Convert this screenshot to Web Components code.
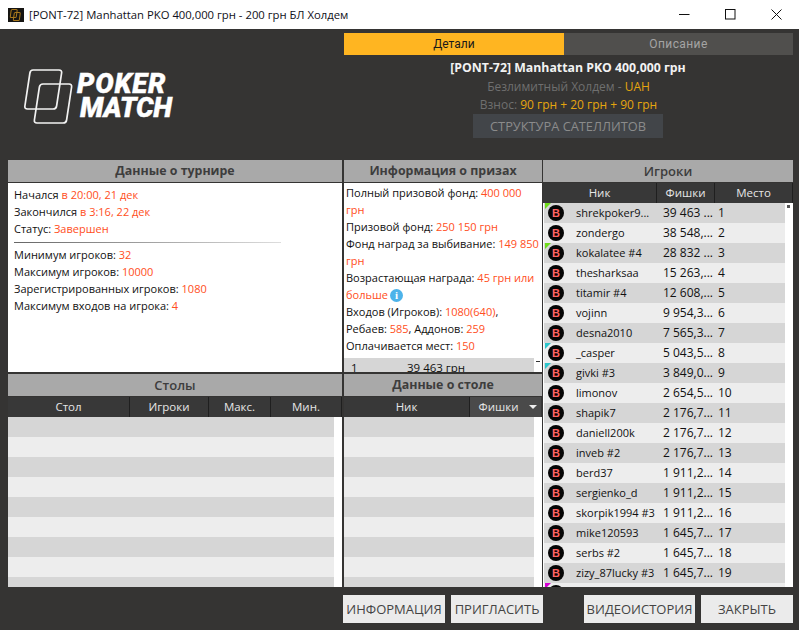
<!DOCTYPE html>
<html lang="ru">
<head>
<meta charset="utf-8">
<title>Manhattan PKO</title>
<style>
    html, body { margin: 0; height: 100%; background: #353433; overflow: hidden; }
    body { font-family: "Open Sans", "Noto Sans", sans-serif; font-size: 11px; }
    .red { color: #ff4e22; }
    .grid {
        display: grid;
        grid-template-columns: 335px 198px 250px;
        grid-template-rows: 212px 213px;
        gap: 2px 1px;
        margin-left: 8px;
    }
    .left { margin-right: 1px; }
    .top { display: flex; height: 131px; }
    .lines { display: block; padding: 3px 6px 0 6px; line-height: 17px; color: #111; }
    .rule { height: 1px; margin: 5px 55px 3px 0; background: linear-gradient(to right, #666, #ddd); }
    .prizes { box-sizing: border-box; height: 189px; overflow: hidden; position: relative; padding-top: 1px; }
    .prizes .lines { padding: 0 0 0 2px; height: 174px; }
    .prize-row { display: flex; background: #d6d6d6; width: 190px; height: 20px; line-height: 20px; color: #111; font-size: 11.5px; }
    .prize-row span:first-child { width: 63px; padding-left: 7px; box-sizing: border-box; }
    .mark { position: absolute; left: 192px; top: 178px; width: 4px; height: 1px; background: #333; }
    .tip { display: inline-block; width: 13px; height: 13px; margin-left: 2px; border-radius: 50%; background: #4db3ea; color: #fff; font: bold 11px/13px "Liberation Serif", serif; text-align: center; vertical-align: 0; }
</style>
</head>
<body>
<template id="bar-tpl">
    <style>
        :host { display: flex; align-items: center; height: 29px; background: #fff; color: #101020; font: 11.3px "Open Sans", sans-serif; }
        .app { width: 16px; height: 14px; margin: 0 5px 0 8px; background: #161513; flex: none; }
        .app svg { display: block; }
        .name { flex: 1; white-space: nowrap; }
        .btn { width: 46px; height: 29px; display: flex; align-items: center; justify-content: center; }
    </style>
    <div class="app"><svg width="16" height="14" viewBox="0 0 16 14" fill="none" stroke="#a9791c" stroke-width="1"><rect x="3.5" y="1.5" width="6" height="8" rx="1" transform="skewX(-8)"/><rect x="7" y="4.5" width="6" height="8" rx="1" transform="skewX(-8)"/></svg></div>
    <div class="name"><slot></slot></div>
    <div class="btn"><svg width="11" height="11"><path d="M0 5.5h10.5" stroke="#111"/></svg></div>
    <div class="btn"><svg width="11" height="11"><rect x=".5" y=".5" width="9.5" height="9.5" fill="none" stroke="#111"/></svg></div>
    <div class="btn"><svg width="11" height="11"><path d="M.5.5l10 10M10.5.5l-10 10" stroke="#111" fill="none"/></svg></div>
</template>

<template id="logo-tpl">
    <style>
        :host { display: block; width: 344px; flex: none; box-sizing: border-box; padding: 40px 0 0 24px; }
        .wrap { display: flex; align-items: flex-start; }
        svg { flex: none; display: block; }
        .word { margin: 3px 0 0 3px; color: #fff; font: italic 900 27.5px/24px Roboto, sans-serif; -webkit-text-stroke: .4px #fff; }
        .word div:first-child { letter-spacing: .8px; }
        .word div:last-child { margin-left: 3px; letter-spacing: -.2px; }
    </style>
    <div class="wrap">
        <svg width="50" height="56" viewBox="0 0 50 56" fill="none" stroke="#f2f2f2" stroke-width="1.7">
            <path d="M9 1h26q3 0 2.6 3l-5 33q-.4 3-3.5 3H3.500q-3 0-2.600-3l5-33Q6.400 1 9 1z"/>
            <path d="M19 15h26q3 0 2.600 3l-5 33q-.4 3-3.500 3H13q-3 0-2.600-3l5-33Q16 15 19 15z"/>
        </svg>
        <div class="word"><div>POKER</div><div>MATCH</div></div>
    </div>
</template>

<template id="head-tpl">
    <style>
        :host { display: block; width: 449px; margin-top: 4px; font: 12px/18px "Open Sans", sans-serif; text-align: center; color: #6f6f6f; }
        .tabs { display: flex; height: 22px; font: 12px/22px Roboto, sans-serif; }
        .tabs div:first-child { width: 220px; background: #ffb521; color: #1a1a1a; }
        .tabs div:last-child { width: 229px; background: #504f4d; color: #a4a4a4; letter-spacing: .4px; }
        .title { margin-top: 3px; padding-right: 1px; color: #f2f2f2; font-weight: 700; font-size: 12.3px; line-height: 20px; }
        .line b { font-weight: 500; color: #e5a50f; }
        button { display: block; margin: 0 0 0 129px; width: 190px; height: 24px; border: 0; padding: 0; background: #424549; color: #8b8b8b; font: 12.8px "Open Sans", sans-serif; }
    </style>
    <div class="tabs"><div>Детали</div><div>Описание</div></div>
    <div class="title">[PONT-72] Manhattan PKO 400,000 грн</div>
    <div class="line">Безлимитный Холдем - <b>UAH</b></div>
    <div class="line">Взнос: <b>90 грн + 20 грн + 90 грн</b></div>
    <button>СТРУКТУРА САТЕЛЛИТОВ</button>
</template>

<template id="panel-tpl">
    <style>
        :host { display: flex; flex-direction: column; overflow: hidden; min-width: 0; }
        h2 { margin: 0; flex: none; height: 22px; background: #a9a9a9; color: #3d3d3d; font: var(--head-font, 700 12.4px/22px "Open Sans", sans-serif); text-align: center; }
        .body { flex: 1; margin-top: 1px; background: #fff; overflow: hidden; min-height: 0; }
    </style>
    <h2></h2>
    <div class="body"><slot></slot></div>
</template>

<template id="table-tpl">
    <style>
        :host { display: block; height: 100%; background: #fff; overflow: hidden; position: relative; }
        .cols { display: flex; height: 20px; background: #383838; color: #e6e6e6; font: 11.5px/20px "Open Sans", sans-serif; text-align: center; }
        .cols div { box-sizing: border-box; border-right: 1px solid #1f1f1f; }
        .cols .on { background: #4a4a4a; position: relative; padding-right: 14px; border: 0; }
        .cols .on::after { content: ""; position: absolute; right: 4px; top: 8px; border: 4px solid transparent; border-top: 4px solid #eee; border-bottom: 0; }
        .thumb { display: none; position: absolute; right: 3px; top: 22px; width: 3px; height: 3px; background: #555; }
        :host([thumb]) .thumb { display: block; }
    </style>
    <div class="cols"></div>
    <slot></slot>
    <span class="thumb"></span>
</template>

<template id="stripe-tpl">
    <style>
        :host { display: block; height: 20px; margin-right: 8px; background: #d6d6d6; }
        :host(:nth-child(even)) { background: #ededed; }
    </style>
</template>

<template id="player-tpl">
    <style>
        :host { display: grid; grid-template-columns: 32px 87px 55px 1fr; height: 20px; width: 241px; margin-left: 1px; align-items: center; background: #d6d6d6; color: #111; font: 11px/20px "Open Sans", sans-serif; position: relative; white-space: nowrap; }
        :host(:nth-child(even)) { background: #ededed; }
        .flag { position: absolute; left: 1px; top: 0; width: 0; height: 0; border-top: 6px solid var(--flag, transparent); border-right: 6px solid transparent; }
        .chip { width: 16px; height: 16px; margin-left: 4px; border-radius: 50%; background: #050505; color: #ff6464; font: 700 11px/16px "Liberation Sans", sans-serif; text-align: center; }
        .stack, .place { font-size: 12px; }
    </style>
    <span class="flag"></span>
    <div class="chip"></div>
    <div class="nick"></div>
    <div class="stack"></div>
    <div class="place"></div>
</template>

<template id="btn-tpl">
    <style>
        :host { display: block; height: 28px; background: #ebebeb; color: #444; font: 13px/28px "Open Sans", sans-serif; text-align: center; }
    </style>
    <slot></slot>
</template>

<win-bar>[PONT-72] Manhattan PKO 400,000 грн - 200 грн БЛ Холдем</win-bar>

<div class="top">
    <brand-logo></brand-logo>
    <tour-head></tour-head>
</div>

<div class="grid">
    <info-panel class="left" heading="Данные о турнире">
        <div class="lines">
            Начался <span class="red">в 20:00, 21 дек</span><br>
            Закончился <span class="red">в 3:16, 22 дек</span><br>
            Статус: <span class="red">Завершен</span>
            <div class="rule"></div>
            Минимум игроков: <span class="red">32</span><br>
            Максимум игроков: <span class="red">10000</span><br>
            Зарегистрированных игроков: <span class="red">1080</span><br>
            Максимум входов на игрока: <span class="red">4</span>
        </div>
    </info-panel>
    <info-panel heading="Информация о призах">
        <div class="prizes">
            <div class="lines">
                Полный призовой фонд: <span class="red">400 000<br>грн</span><br>
                Призовой фонд: <span class="red">250 150 грн</span><br>
                Фонд наград за выбивание: <span class="red">149 850<br>грн</span><br>
                Возрастающая награда: <span class="red">45 грн или<br>больше</span><span class="tip">i</span><br>
                Входов (Игроков): <span class="red">1080(640)</span>,<br>
                Ребаев: <span class="red">585</span>, Аддонов: <span class="red">259</span><br>
                Оплачивается мест: <span class="red">150</span>
            </div>
            <div class="prize-row"><span>1</span><span>39 463 грн</span></div>
            <span class="mark"></span>
        </div>
    </info-panel>
    <info-panel style="grid-column:3;grid-row:1 / 3;--head-font:600 13px/22px 'Open Sans',sans-serif" heading="Игроки">
        <data-table id="players" thumb cols="114:Ник,58:Фишки,78:Место"></data-table>
    </info-panel>
    <info-panel class="left" style="--head-font:600 13px/22px 'Open Sans',sans-serif" heading="Столы">
        <data-table cols="122:Стол,79:Игроки,62:Макс.,71:Мин." empty="9"></data-table>
    </info-panel>
    <info-panel heading="Данные о столе">
        <data-table cols="126:Ник,!71:Фишки" empty="9"></data-table>
    </info-panel>
</div>

<div style="display:flex;margin:8px 6px 0 343px">
    <action-btn style="width:102px">ИНФОРМАЦИЯ</action-btn>
    <action-btn style="width:92px;margin-left:6px">ПРИГЛАСИТЬ</action-btn>
    <action-btn style="width:111px;margin-left:41px">ВИДЕОИСТОРИЯ</action-btn>
    <action-btn style="width:92px;margin-left:6px">ЗАКРЫТЬ</action-btn>
</div>

<script>
    // every element just clones its own template into an open shadow root
    class Base extends HTMLElement {
        constructor() {
            super();
            this.attachShadow({mode: 'open'});
            const tpl = document.getElementById(this.constructor.tpl);
            this.shadowRoot.appendChild(tpl.content.cloneNode(true));
        }
    }

    class WinBar extends Base { static tpl = 'bar-tpl'; }
    class BrandLogo extends Base { static tpl = 'logo-tpl'; }
    class TourHead extends Base { static tpl = 'head-tpl'; }
    class ActionBtn extends Base { static tpl = 'btn-tpl'; }
    class StripeRow extends Base { static tpl = 'stripe-tpl'; }

    class InfoPanel extends Base {
        static tpl = 'panel-tpl';
        connectedCallback() {
            this.shadowRoot.querySelector('h2').textContent = this.getAttribute('heading');
        }
    }

    class DataTable extends Base {
        static tpl = 'table-tpl';
        connectedCallback() {
            const cols = this.shadowRoot.querySelector('.cols');
            this.getAttribute('cols').split(',').forEach(c => {
                const [w, label] = c.split(':');
                const d = document.createElement('div');
                if (w[0] === '!') d.className = 'on';
                d.style.width = w.replace('!', '') + 'px';
                d.textContent = label;
                cols.appendChild(d);
            });
            const n = +this.getAttribute('empty') || 0;
            for (let i = 0; i < n; i++) {
                this.appendChild(document.createElement('stripe-row'));
            }
        }
    }

    class PlayerRow extends Base {
        static tpl = 'player-tpl';
        connectedCallback() {
            const root = this.shadowRoot;
            const nick = this.getAttribute('nick');
            root.querySelector('.nick').textContent = nick;
            root.querySelector('.stack').textContent = this.getAttribute('stack');
            root.querySelector('.place').textContent = this.getAttribute('place');
            // the last row is cut by the panel edge, only its chip top shows
            if (nick) root.querySelector('.chip').textContent = 'B';
            if (this.hasAttribute('flag')) {
                root.querySelector('.flag').style.setProperty('--flag', this.getAttribute('flag'));
            }
        }
    }

    customElements.define('win-bar', WinBar);
    customElements.define('brand-logo', BrandLogo);
    customElements.define('tour-head', TourHead);
    customElements.define('action-btn', ActionBtn);
    customElements.define('stripe-row', StripeRow);
    customElements.define('info-panel', InfoPanel);
    customElements.define('data-table', DataTable);
    customElements.define('player-row', PlayerRow);

    const players = [
        ['shrekpoker9...', '39 463 ...', '#6fdc1a'],
        ['zondergo', '38 548,...'],
        ['kokalatee #4', '28 832 ...', '#6fdc1a'],
        ['thesharksaa', '15 263,...'],
        ['titamir #4', '12 608,...'],
        ['vojinn', '9 954,3...'],
        ['desna2010', '7 565,3...'],
        ['_casper', '5 043,5...', '#2cc6cc'],
        ['givki #3', '3 849,0...', '#2cc6cc'],
        ['limonov', '2 654,5...'],
        ['shapik7', '2 176,7...'],
        ['daniell200k', '2 176,7...'],
        ['inveb #2', '2 176,7...'],
        ['berd37', '1 911,2...'],
        ['sergienko_d', '1 911,2...'],
        ['skorpik1994 #3', '1 911,2...'],
        ['mike120593', '1 645,7...'],
        ['serbs #2', '1 645,7...'],
        ['zizy_87lucky #3', '1 645,7...'],
        ['', '', '#d400d4']
    ];
    const table = document.getElementById('players');
    players.forEach((p, i) => {
        const row = document.createElement('player-row');
        row.setAttribute('nick', p[0]);
        row.setAttribute('stack', p[1]);
        row.setAttribute('place', p[0] ? i + 1 : '');
        if (p[2]) row.setAttribute('flag', p[2]);
        table.appendChild(row);
    });
</script>
</body>
</html>
